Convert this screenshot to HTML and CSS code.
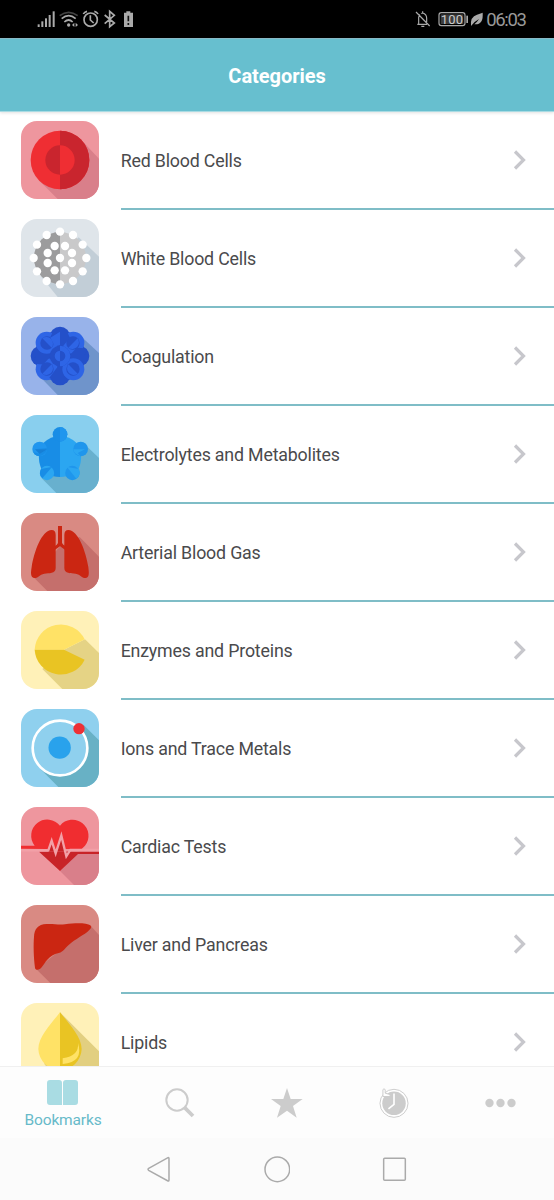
FILE: index.html
```html
<!DOCTYPE html>
<html lang="en">
<head>
<meta charset="utf-8">
<title>Categories</title>
<link rel="stylesheet" href="styles.css">
</head>
<body>
<div class="screen">
  <div class="status">
    <svg class="status-left" viewBox="0 0 420 114">
      <g fill="#aaa"><rect x="113" y="73" width="6" height="8"/><rect x="124" y="64" width="6" height="17"/><rect x="135" y="55" width="6" height="26"/><rect x="146" y="45" width="6" height="36"/><rect x="158" y="34" width="6" height="47"/></g>
      <g fill="none" stroke-width="5">
        <path d="M179 47Q206 27 233 47" stroke="#444"/>
        <path d="M185 56Q206 38 227 56M193 66Q206 54 218 66" stroke="#aaa"/>
        <g stroke="#aaa"><circle cx="272" cy="59" r="20"/><path d="M250 42Q253 36 261 34M283 34Q291 36 294 42M271 46V60L281 69M314 45L343 69L329 80V34L343 46L314 71"/></g>
      </g>
      <g fill="#aaa"><circle cx="206" cy="75" r="5"/><path d="M216 75l7-7v13zM234 75l-7-7v13z"/><path d="M379 34h12v4h8v43h-27V38h7z"/></g>
      <path d="M385 47v17M385 69v6" stroke="#111" stroke-width="5"/>
    </svg>
    <svg class="status-bell" viewBox="410 0 170 114">
      <g fill="none" stroke="#aaa" stroke-width="3.500">
        <path d="M416 36L457 78M420 73H449M424 73V52Q425 46 428 44M432 41Q434 39 436 39V34M436 39Q448 42 448 55V66M432 79H441"/>
        <rect x="485" y="38" width="78" height="39" rx="7"/>
      </g>
      <rect x="490" y="43" width="68" height="29" fill="#3d3d3d"/>
      <rect x="567" y="47" width="5" height="22" fill="#aaa"/>
      <text class="battery" x="490" y="72" textLength="67">100</text>
    </svg>
    <svg class="status-leaf" viewBox="580 0 42 114"><path d="M583 78Q580 50 601 44L618 38Q621 75 593 73Q600 68 607 57Q592 65 583 78Z" fill="#aaa"/></svg>
    <span class="time">06:03</span>
  </div>
  <header class="header">Categories</header>
  <main class="list">
    <div class="row">
      <svg class="icon bg-pink" viewBox="34 28 234 234">
        <path d="M89 207L144 262H268V141L213 83Z" fill="#d97f8a"/>
        <circle cx="151" cy="145" r="88" fill="#ef2e33"/><path d="M151 57a88 88 0 0 1 0 176z" fill="#c9252e"/>
        <circle cx="151" cy="145" r="44" fill="#ef2e33"/><path d="M151 101a44 44 0 0 0 0 88z" fill="#c9252e"/>
      </svg>
      <div class="label">Red Blood Cells<svg class="chevron" viewBox="0 0 14 20"><path d="M2 1.5L10.5 10L2 18.5"/></svg></div>
    </div>
    <div class="row">
      <svg class="icon bg-gray" viewBox="34 28 234 234">
        <path d="M95 201L144 262H268V141L207 83Z" fill="#c2ced7"/>
        <circle cx="151" cy="145" r="78" fill="#c9c9ca"/><path d="M151 67a78 78 0 0 0 0 156z" fill="#9c9c9d"/>
        <g fill="#fff"><circle cx="151" cy="66" r="12.500"/><circle cx="190" cy="76" r="12.500"/><circle cx="219" cy="105" r="12.500"/><circle cx="230" cy="145" r="12.500"/><circle cx="219" cy="185" r="12.500"/><circle cx="190" cy="214" r="12.500"/><circle cx="151" cy="224" r="12.500"/><circle cx="111" cy="214" r="12.500"/><circle cx="82" cy="185" r="12.500"/><circle cx="72" cy="145" r="12.500"/><circle cx="82" cy="105" r="12.500"/><circle cx="111" cy="76" r="12.500"/>
        <circle cx="135" cy="109" r="12.500"/><circle cx="166" cy="109" r="12.500"/><circle cx="187" cy="130" r="12.500"/><circle cx="187" cy="160" r="12.500"/><circle cx="166" cy="182" r="12.500"/><circle cx="135" cy="182" r="12.500"/><circle cx="114" cy="160" r="12.500"/><circle cx="114" cy="130" r="12.500"/><circle cx="151" cy="145" r="12.500"/></g>
      </svg>
      <div class="label">White Blood Cells<svg class="chevron" viewBox="0 0 14 20"><path d="M2 1.5L10.5 10L2 18.5"/></svg></div>
    </div>
    <div class="row">
      <svg class="icon bg-indigo" viewBox="34 28 234 234">
        <path d="M89 205L144 262H268V136L212 84Z" fill="#6f94cb"/>
        <g fill="#2450c9"><circle cx="151" cy="145" r="76"/><circle cx="151" cy="88" r="31"/><circle cx="208" cy="145" r="31"/><circle cx="151" cy="202" r="31"/><circle cx="94" cy="145" r="31"/></g>
        <g fill="#2e65e6"><circle cx="111" cy="105" r="33"/><circle cx="191" cy="105" r="33"/><circle cx="111" cy="185" r="33"/><circle cx="191" cy="185" r="33"/></g>
        <g fill="#2450c9"><circle cx="112" cy="106" r="20"/><circle cx="190" cy="106" r="20"/><circle cx="112" cy="184" r="20"/><circle cx="190" cy="184" r="20"/>
        <path d="M130 72H172L181 90L158 118H146L122 88ZM78 145H124L101 170Q80 171 70 163ZM224 145H178L201 120Q222 119 232 127ZM151 168V225H140L119 210Z"/><circle cx="151" cy="145" r="31"/></g>
        <g fill="#2e65e6"><path d="M98 92L126 120A20 20 0 0 0 98 92ZM204 92L176 120A20 20 0 0 0 204 92ZM98 198L126 170A20 20 0 0 1 98 198ZM204 198L176 170A20 20 0 0 0 204 198Z"/><path d="M151 114a31 31 0 0 1 0 62v-15a16 16 0 0 0 0-32z"/><path d="M151 129a16 16 0 0 0 0 32zM151 72V112L136 116L122 90Z"/></g>
      </svg>
      <div class="label">Coagulation<svg class="chevron" viewBox="0 0 14 20"><path d="M2 1.5L10.5 10L2 18.5"/></svg></div>
    </div>
    <div class="row">
      <svg class="icon bg-sky" viewBox="34 28 234 234">
        <path d="M96 218L140 262H268V157L225 116Z" fill="#68b0ce"/>
        <path d="M151 90Q122 92 102 111L88 148Q86 168 95 190L128 211Q140 214 151 214Z" fill="#188de6"/>
        <path d="M151 90Q180 92 200 111L214 148Q216 168 207 190L174 211Q162 214 151 214Z" fill="#2ba6f1"/>
        <circle cx="90" cy="130" r="22" fill="#2096ee"/><path d="M74 131L112 127Q112 146 89 152Q76 150 71 140L92 144L110 131Z" fill="#188de6"/><path d="M76 131H112L90 145Z" fill="#167fd6"/>
        <circle cx="213" cy="130" r="22" fill="#1f96ec"/><path d="M226 131H191Q193 146 213 152L204 142Z" fill="#2ba6f1"/>
        <circle cx="112" cy="202" r="21.500" fill="#2ba6f1"/><path d="M127 184L94 190A22 22 0 0 0 98 218Z" fill="#188de6"/>
        <circle cx="188" cy="202" r="21.500" fill="#1f96ec"/><path d="M172 184L200 219A22 22 0 0 0 208 190Z" fill="#2ba6f1"/>
        <circle cx="151" cy="86" r="22" fill="#188de6"/><path d="M151 64a22 22 0 0 1 0 44z" fill="#2096ee"/>
      </svg>
      <div class="label">Electrolytes and Metabolites<svg class="chevron" viewBox="0 0 14 20"><path d="M2 1.5L10.5 10L2 18.5"/></svg></div>
    </div>
    <div class="row">
      <svg class="icon bg-rust" viewBox="34 28 234 234">
        <path d="M68 217L113 262H268V159L210 100L150 130Z" fill="#c56f6c"/>
        <path d="M145 67H157V118Q160 124 167 128V139L151 128L135 139V128Q143 124 145 118Z" fill="#cb2612"/>
        <path d="M126 79Q138 79 138 94V193C138 211 118 208 104 210C89 213 86 223 75 223C62 222 63 208 66 190C73 146 96 79 126 79ZM176 79Q164 79 164 94V193C164 211 184 208 198 210C213 213 216 223 227 223C240 222 238 208 236 190C229 146 206 79 176 79Z" fill="#cb2612"/>
      </svg>
      <div class="label">Arterial Blood Gas<svg class="chevron" viewBox="0 0 14 20"><path d="M2 1.5L10.5 10L2 18.5"/></svg></div>
    </div>
    <div class="row">
      <svg class="icon bg-cream" viewBox="34 28 234 234">
        <path d="M98 202L158 262H268V154L226 113L163 144Z" fill="#e5d385"/>
        <path d="M163 144L225 113A79 79 0 0 0 75 144Z" fill="#ffe266"/><path d="M163 144L225 174A79 79 0 0 1 75 144Z" fill="#e9c423"/>
      </svg>
      <div class="label">Enzymes and Proteins<svg class="chevron" viewBox="0 0 14 20"><path d="M2 1.5L10.5 10L2 18.5"/></svg></div>
    </div>
    <div class="row">
      <svg class="icon bg-azure" viewBox="34 28 234 234">
        <path d="M90 206L146 262H268V122L222 76L207 86A82 82 0 0 1 90 206Z" fill="#68b1c5"/>
        <circle cx="151" cy="145" r="82" fill="none" stroke="#fff" stroke-width="8"/><circle cx="150" cy="144" r="33.500" fill="#29a2ec"/><circle cx="208" cy="87" r="17" fill="#ed3035"/>
      </svg>
      <div class="label">Ions and Trace Metals<svg class="chevron" viewBox="0 0 14 20"><path d="M2 1.5L10.5 10L2 18.5"/></svg></div>
    </div>
    <div class="row">
      <svg class="icon bg-pink" viewBox="34 28 234 234">
        <path d="M151 220L193 262H268V162H208Z" fill="#d97f8a"/>
        <path d="M34 144H75A47 47 0 1 1 151 84A47 47 0 0 1 226 144L216 154H112L34 153Z" fill="#f02d30"/>
        <path d="M88 162H268V169H205L151 220Z" fill="#c82328"/>
        <path d="M116 162L126 130L138 168L155 116L170 178L181 162Z" fill="#c82328"/>
        <path d="M34 158H116L126 129L138 167L155 114L170 176L182 157H268" fill="none" stroke="#f2a0a7" stroke-width="7"/>
      </svg>
      <div class="label">Cardiac Tests<svg class="chevron" viewBox="0 0 14 20"><path d="M2 1.5L10.5 10L2 18.5"/></svg></div>
    </div>
    <div class="row">
      <svg class="icon bg-rust" viewBox="34 28 234 234">
        <path d="M80 221L122 262H268V118L243 90Z" fill="#c56f6c"/>
        <path d="M73 124C74 101 84 86 111 85C132 84 145 88 166 86C189 83 208 82 228 84Q248 87 244 97C232 114 207 124 184 142C166 156 163 168 147 172C117 178 107 201 96 215C91 223 77 226 76 216C72 184 71 147 73 124Z" fill="#cb2612"/>
      </svg>
      <div class="label">Liver and Pancreas<svg class="chevron" viewBox="0 0 14 20"><path d="M2 1.5L10.5 10L2 18.5"/></svg></div>
    </div>
    <div class="row">
      <svg class="icon bg-cream" viewBox="34 28 234 234">
        <path d="M151 56L268 173V262H145L104 211Z" fill="#e2cf80"/>
        <path d="M151 56C130 84 86 127 86 166A65 65 0 0 0 151 229Z" fill="#ffe266"/><path d="M151 56C172 84 216 127 216 166A65 65 0 0 1 151 229Z" fill="#e9c423"/>
        <path d="M205 148Q209 187 159 194V211Q223 205 205 148Z" fill="#ffe266"/>
      </svg>
      <div class="label">Lipids<svg class="chevron" viewBox="0 0 14 20"><path d="M2 1.5L10.5 10L2 18.5"/></svg></div>
    </div>
  </main>
  <nav class="tabs">
    <div class="tab active">
      <svg class="book" viewBox="0 0 32 25"><path d="M3 0H12Q15 0 15 3V25H3Q0 25 0 22V3Q0 0 3 0ZM19 0H28Q31 0 31 3V22Q31 25 28 25H16V3Q16 0 19 0Z" fill="#a9dce3"/></svg>
      <span>Bookmarks</span>
    </div>
    <div class="tab"><svg class="tab-icon" viewBox="0 0 90 90"><g fill="none" stroke="#ccc"><circle cx="36" cy="36" r="32" stroke-width="6"/><path d="M59 59L84 84" stroke-width="11"/></g></svg></div>
    <div class="tab"><svg class="tab-icon star" viewBox="0 0 96 90"><path d="M48 0L59 33H95L66 54L77 89L48 68L18 89L29 54L0 33H37Z" fill="#ccc"/></svg></div>
    <div class="tab"><svg class="tab-icon" viewBox="305 290 92 92">
      <circle cx="351" cy="337" r="43" fill="#fff" stroke="#ccc" stroke-width="3"/><circle cx="351" cy="337" r="36" fill="#ccc"/>
      <path d="M351 307V340L334 354" fill="none" stroke="#fff" stroke-width="5"/>
      <path d="M317 295Q320 290 324 295V306L339 310V316H317Z" fill="#fff" stroke="#ccc" stroke-width="3"/>
    </svg></div>
    <div class="tab"><svg class="tab-icon dots" viewBox="0 0 92 90"><g fill="#ccc"><circle cx="13" cy="45" r="12.500"/><circle cx="46" cy="45" r="12.500"/><circle cx="79" cy="45" r="12.500"/></g></svg></div>
  </nav>
  <div class="system">
    <svg viewBox="437 495 80 86"><path d="M445 535L503 503Q506 502 506 506V570Q506 574 503 573L445 541Q441 538 445 535Z"/></svg>
    <svg viewBox="-40 495 80 86"><circle cx="0" cy="538" r="37"/></svg>
    <svg viewBox="312 495 80 86"><rect x="320" y="505" width="65" height="66" rx="3"/></svg>
  </div>
</div>
</body>
</html>
```
FILE: styles.css
```css
* { box-sizing: border-box; }
body { margin: 0; background: #fff; font-family: Roboto, sans-serif; }
svg { display: block; flex: none; }
.screen { width: 554px; height: 1200px; display: flex; flex-direction: column; overflow: hidden; }
.status { height: 38px; flex: none; background: #000; display: flex; align-items: center; }
.status-left { width: 140px; height: 38px; }
.status-bell { width: 56.67px; height: 38px; margin-left: 273.67px; }
.status-leaf { width: 14px; height: 38px; }
.battery { font-size: 39px; font-weight: 400; fill: #ccc; }
.time { margin: 2px 0 0 2px; font-size: 18.5px; line-height: 22px; color: #999; font-weight: 400; letter-spacing: -1.4px; }
.header { height: 74px; flex: none; background: #67bfcf; border-top: 1px solid #88b9c6; border-bottom: 1px solid #a9dbe3; box-shadow: 0 1px 3px rgba(0,0,0,.12); display: flex; align-items: center; justify-content: center; color: #fff; font-size: 20px; font-weight: 700; letter-spacing: -0.05px; padding-top: 2px; z-index: 1; }
.list { flex: 1; min-height: 0; overflow: hidden; }
.row { height: 98px; display: flex; padding-left: 21.33px; gap: 21.33px; }
.icon { width: 78px; height: 78px; margin-top: 9.33px; border-radius: 16px; }
.bg-pink { background: #ee969e; }
.bg-gray { background: #dfe5ea; }
.bg-indigo { background: #98b3ea; }
.bg-sky { background: #89cfee; }
.bg-rust { background: #d98a83; }
.bg-cream { background: #fff1b8; }
.bg-azure { background: #8fd0ee; }
.label { flex: 1; height: 98px; border-bottom: 2px solid #7fbdc7; display: flex; align-items: center; justify-content: space-between; padding-right: 27px; font-size: 17.8px; letter-spacing: -0.18px; color: #4a4a4c; }
.chevron { width: 14px; height: 20px; }
.chevron path { fill: none; stroke: #c7c7cc; stroke-width: 3.2; }
.tabs { height: 72px; flex: none; background: #fdfdfd; border-top: 1px solid #f0f0f0; display: flex; padding: 0 0 0 9px; }
.tab { width: 107px; height: 71px; display: flex; flex-direction: column; align-items: center; padding-top: 20.5px; padding-left: 20px; }
.active { padding-top: 13px; padding-left: 1px; gap: 5.5px; color: #67bac9; font-size: 15.5px; line-height: 18px; letter-spacing: -0.15px; }
.book { width: 32px; height: 25px; }
.tab-icon { width: 30px; height: 30px; }
.star { width: 32px; }
.dots { width: 31px; }
.system { height: 62px; flex: none; background: #fbfbfb; display: flex; justify-content: center; align-items: center; gap: 91px; padding-top: 1px; }
.system svg { width: 26.67px; height: 28.67px; fill: none; stroke: #aaa; stroke-width: 4.5; }
```
